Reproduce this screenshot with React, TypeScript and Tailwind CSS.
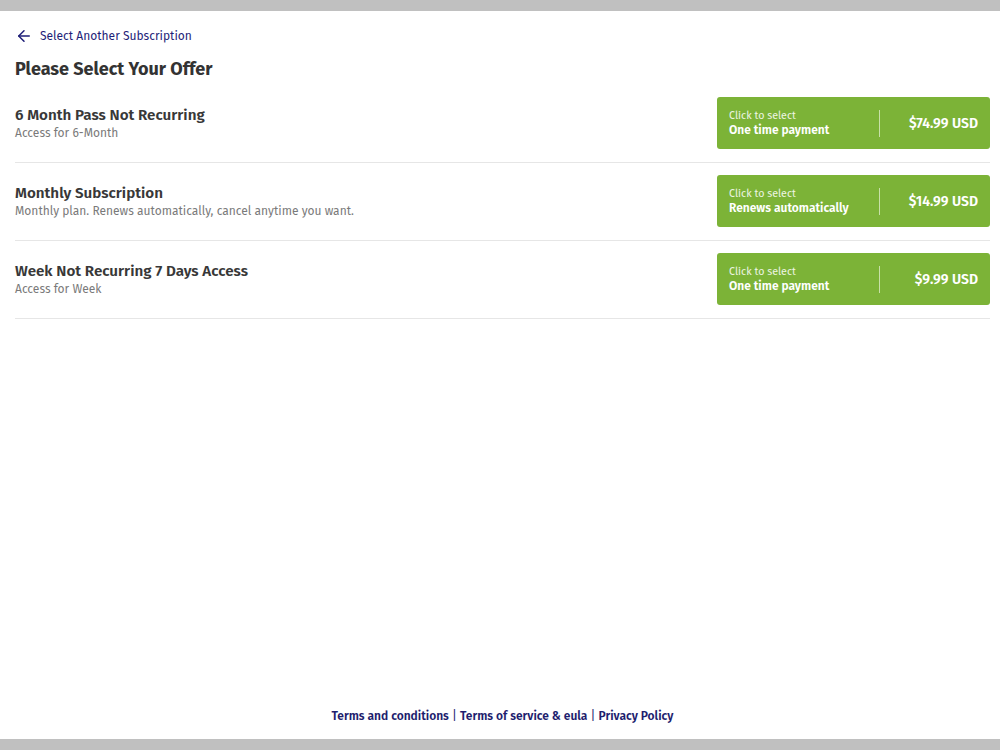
import React from 'react';
import { ArrowLeft } from 'lucide-react';

const offers = [
  {
    title: '6 Month Pass Not Recurring',
    desc: 'Access for 6-Month',
    kind: 'One time payment',
    price: '$74.99 USD',
  },
  {
    title: 'Monthly Subscription',
    desc: 'Monthly plan. Renews automatically, cancel anytime you want.',
    kind: 'Renews automatically',
    price: '$14.99 USD',
  },
  {
    title: 'Week Not Recurring 7 Days Access',
    desc: 'Access for Week',
    kind: 'One time payment',
    price: '$9.99 USD',
  },
];

export default function App() {
  return (
    <div
      className="min-h-screen w-full flex flex-col bg-white"
      style={{ fontFamily: '"Fira Sans", Lato, "Open Sans", sans-serif' }}
    >
      {/* top bar */}
      <div className="h-[11px] bg-[#c0c0c0]" />

      <main className="flex-1 pl-[15px] pr-[10px]">
        {/* back link */}
        <a href="#" className="flex items-center gap-[7px] mt-[16px] h-[18px] text-[12px] text-[#1e1e78]">
          <ArrowLeft size={18} strokeWidth={2} />
          <span>Select Another Subscription</span>
        </a>

        <h1 className="mt-[12px] text-[18px] font-bold text-[#333] leading-[24px]">
          Please Select Your Offer
        </h1>

        {/* offers */}
        <div className="mt-[4px]">
          {offers.map((o) => (
            <div
              key={o.title}
              className="flex items-center justify-between pt-[12px] pb-[13px] border-b border-[#e6e6e6]"
            >
              <div className="flex flex-col">
                <span className="text-[15.2px] font-semibold text-[#383838] leading-[19px]">
                  {o.title}
                </span>
                <span className="text-[12px] text-[#7a7a7a] leading-[16px]">{o.desc}</span>
              </div>

              <button className="w-[273px] h-[52px] bg-[#7cb337] rounded-[3px] flex items-center text-white text-left">
                <div className="w-[162px] pl-[12px] flex flex-col">
                  <span className="text-[10.7px] leading-[14px] text-[#eef5e4]">Click to select</span>
                  <span className="text-[12px] font-semibold leading-[15px]">{o.kind}</span>
                </div>
                <div className="w-[1px] h-[27px] bg-[#c8e0a8]" />
                <div className="flex-1 text-right pr-[12px] text-[14px] font-semibold">
                  {o.price}
                </div>
              </button>
            </div>
          ))}
        </div>
      </main>

      {/* footer */}
      <footer className="pl-[15px] pr-[10px] pb-[14px] text-center text-[12px] font-semibold text-[#1e1e6e]">
        <a href="#">Terms and conditions</a>
        <span className="font-normal"> | </span>
        <a href="#">Terms of service &amp; eula</a>
        <span className="font-normal"> | </span>
        <a href="#">Privacy Policy</a>
      </footer>

      {/* bottom bar */}
      <div className="h-[11px] bg-[#c0c0c0]" />
    </div>
  );
}
